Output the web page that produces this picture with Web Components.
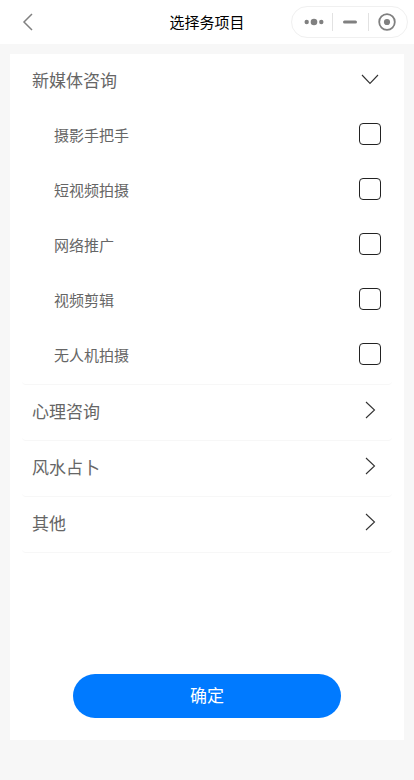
<!DOCTYPE html>
<html lang="zh-CN">
<head>
<meta charset="utf-8">
<meta name="viewport" content="width=device-width, initial-scale=1">
<title>选择务项目</title>
<style>
html, body { margin: 0; height: 100%; }
body { background: #f7f7f7; color: #666; font-family: "Noto Sans CJK SC", sans-serif; }
</style>
</head>
<body>
<service-page>
  <nav-bar slot="nav">选择务项目</nav-bar>
  <service-group open>新媒体咨询
    <service-option slot="options">摄影手把手</service-option>
    <service-option slot="options">短视频拍摄</service-option>
    <service-option slot="options">网络推广</service-option>
    <service-option slot="options">视频剪辑</service-option>
    <service-option slot="options">无人机拍摄</service-option>
  </service-group>
  <service-group>心理咨询</service-group>
  <service-group>风水占卜</service-group>
  <service-group>其他</service-group>
  <confirm-button slot="action">确定</confirm-button>
</service-page>
<script>
class BaseElement extends HTMLElement {
  constructor() {
    super();
    this.attachShadow({ mode: 'open' }).innerHTML = this.constructor.markup;
  }
}

class ServicePage extends BaseElement {
  static markup = `
    <style>
      :host { display: flex; flex-direction: column; box-sizing: border-box; min-height: 100vh; padding-bottom: 40px; }
      main { flex: 1; display: flex; flex-direction: column; margin: 10px 10px 0; padding: 0 12px 22px; background: #fff; }
      .groups { flex: 1; padding-bottom: 24px; }
    </style>
    <slot name="nav"></slot>
    <main>
      <div class="groups"><slot></slot></div>
      <slot name="action"></slot>
    </main>`;
}

class NavBar extends BaseElement {
  static markup = `
    <style>
      :host { display: block; background: #fff; color: #000; }
      header { display: grid; grid-template-columns: 1fr auto 1fr; align-items: center; height: 44px; padding: 0 6px; }
      h1 { margin: 0; font-size: 15px; line-height: 22px; font-weight: 400; }
      button { display: flex; align-items: center; justify-content: center; margin: 0; padding: 0; border: 0; background: none; color: #808080; height: 100%; }
      .back { justify-self: start; width: 44px; height: 44px; }
      .capsule { justify-self: end; display: flex; align-items: center; box-sizing: border-box; width: 117px; height: 32px; padding: 0 2px 0 4px; border: 1px solid #f0f0f0; border-radius: 16px; }
      .capsule button { width: 36px; }
      .capsule i { width: 1px; height: 18px; background: #e2e2e2; }
      svg { display: block; }
    </style>
    <header>
      <button class="back" aria-label="返回">
        <svg width="12" height="18" viewBox="0 0 12 18" fill="none" stroke="currentColor" stroke-width="1.5"><path d="M10 1 2 9l8 8"/></svg>
      </button>
      <h1><slot></slot></h1>
      <div class="capsule">
        <button aria-label="更多"><svg width="20" height="8" viewBox="0 0 20 8" fill="currentColor"><circle cx="2.7" cy="4" r="2.2"/><circle cx="10" cy="4" r="3.3"/><circle cx="17.3" cy="4" r="2.2"/></svg></button>
        <i></i>
        <button aria-label="最小化"><svg width="14" height="4" viewBox="0 0 14 4" fill="currentColor"><rect y=".5" width="14" height="3" rx="1.5"/></svg></button>
        <i></i>
        <button aria-label="关闭"><svg width="18" height="18" viewBox="0 0 18 18"><circle cx="9" cy="9" r="7.8" fill="none" stroke="currentColor" stroke-width="1.8"/><circle cx="9" cy="9" r="3.1" fill="currentColor"/></svg></button>
      </div>
    </header>`;
}

class ServiceGroup extends BaseElement {
  static markup = `
    <style>
      :host { display: block; border-bottom: 1px solid #f7f7f7; border-radius: 4px; }
      .head { display: flex; align-items: center; justify-content: space-between; box-sizing: border-box; width: 100%; height: 55px; margin: 0; padding: 0 12px 4px 10px; border: 0; background: none; color: inherit; font: 17px/24px "Noto Sans CJK SC", sans-serif; text-align: left; }
      svg { display: block; margin-bottom: 2px; color: #333; }
      :host([open]) svg { transform: rotate(90deg); }
      .options { display: none; }
      :host([open]) .options { display: block; }
    </style>
    <button class="head"><span><slot></slot></span>
      <svg width="20" height="20" viewBox="0 0 20 20" fill="none" stroke="currentColor" stroke-width="1.1"><path d="M6 2l8.500 8L6 18"/></svg>
    </button>
    <div class="options"><slot name="options"></slot></div>`;
  connectedCallback() {
    const head = this.shadowRoot.querySelector('.head');
    const sync = () => head.setAttribute('aria-expanded', this.hasAttribute('open'));
    sync();
    head.addEventListener('click', () => { this.toggleAttribute('open'); sync(); });
  }
}

class ServiceOption extends BaseElement {
  static markup = `
    <style>
      :host { display: block; }
      label { display: flex; align-items: center; justify-content: space-between; box-sizing: border-box; height: 55px; padding: 0 11px 4px 32px; font-size: 15px; line-height: 22px; }
      input { appearance: none; box-sizing: border-box; width: 22px; height: 22px; margin: 0 0 2px; border: 1px solid #222; border-radius: 4px; background: #fff; }
      input:checked { background: #007aff; border-color: #007aff; }
    </style>
    <label><span><slot></slot></span><input type="checkbox"></label>`;
}

class ConfirmButton extends BaseElement {
  static markup = `
    <style>
      :host { display: flex; justify-content: center; margin: 0 -12px; }
      button { width: 68%; height: 44px; margin: 0; padding: 0 0 2px; border: 0; border-radius: 22px; background: #007aff; color: #fff; font: 17px/24px "Noto Sans CJK SC", sans-serif; }
    </style>
    <button><slot></slot></button>`;
}

customElements.define('service-page', ServicePage);
customElements.define('nav-bar', NavBar);
customElements.define('service-group', ServiceGroup);
customElements.define('service-option', ServiceOption);
customElements.define('confirm-button', ConfirmButton);
</script>
</body>
</html>
